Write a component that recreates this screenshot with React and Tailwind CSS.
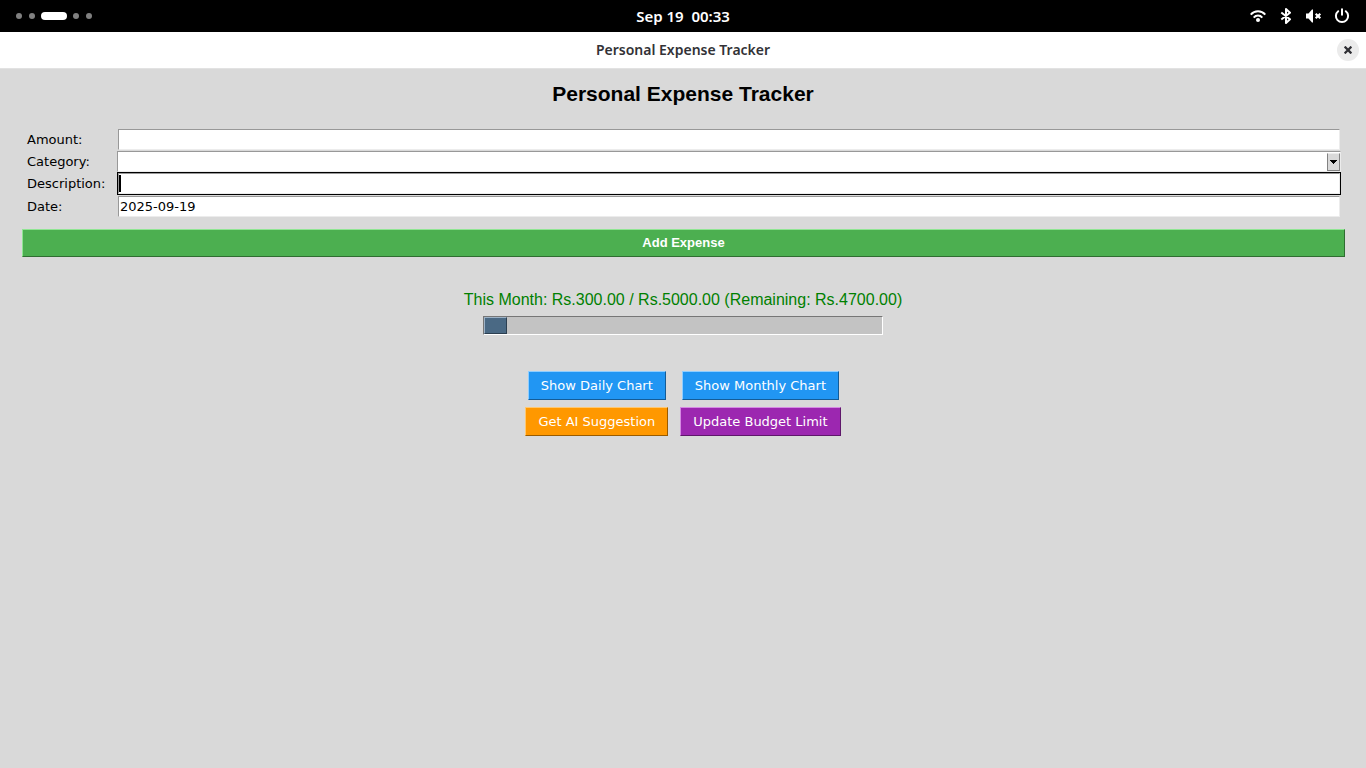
import React, { useState } from "react";

const BUDGET = { spent: 300, limit: 5000 };

function WorkspaceDots() {
  return (
    <button type="button" aria-label="Activities" className="flex items-center gap-[6px]">
      <span className="flex gap-[7px]">
        <span className="size-[6px] rounded-full bg-[#808080]" />
        <span className="size-[6px] rounded-full bg-[#808080]" />
      </span>
      <span className="h-2 w-[26px] rounded-full bg-white" />
      <span className="flex gap-[7px]">
        <span className="size-[6px] rounded-full bg-[#808080]" />
        <span className="size-[6px] rounded-full bg-[#808080]" />
      </span>
    </button>
  );
}

function StatusIcons() {
  return (
    <button type="button" aria-label="System status" className="flex items-center gap-3 text-white">
      <svg className="size-4" viewBox="0 0 16 16" fill="none" stroke="currentColor" strokeWidth="2">
        <path d="M.7 6.6C2.6 4.400 5.200 3.200 8 3.200s5.400 1.200 7.300 3.400" />
        <path d="M3.700 9.600C4.800 8.300 6.300 7.500 8 7.500s3.200.8 4.300 2.100" />
        <circle cx="8" cy="12" r="2" fill="currentColor" stroke="none" />
      </svg>
      <svg className="size-4" viewBox="0 0 16 16" fill="none" stroke="currentColor" strokeWidth="2" strokeLinejoin="round">
        <path d="M3.300 4.500 12 11.300 8 15V1l4 3.700-8.700 6.800" />
      </svg>
      <svg className="size-4" viewBox="0 0 16 16" fill="currentColor">
        <path d="M0 5.500h2.500L6 1.500h1v13H6l-3.500-4H0z" />
        <path d="m9.700 5.700 4.600 4.600m0-4.600-4.600 4.600" fill="none" stroke="currentColor" strokeWidth="2.200" />
      </svg>
      <svg className="size-4" viewBox="0 0 16 16" fill="none" stroke="currentColor" strokeWidth="2" strokeLinecap="round">
        <path d="M4.200 3.200A6.100 6.100 0 1 0 11.800 3.200" />
        <path d="M8 1.200v5.600" />
      </svg>
    </button>
  );
}

const entry =
  "h-[21px] w-full border border-t-[#989898] border-l-[#989898] border-r-[#ececec] border-b-[#ececec] bg-white px-px text-[13px] text-black outline-none";
const label = "pl-[5px] text-[13px] leading-[21px] text-black";

function ExpenseForm() {
  const [form, setForm] = useState({ amount: "", category: "", description: "", date: "2025-09-19" });
  const set = (key) => (e) => setForm({ ...form, [key]: e.target.value });
  return (
    <form onSubmit={(e) => e.preventDefault()} className="flex flex-col pr-[21px] pl-[22px]">
      <div className="grid grid-cols-[95px_1fr] items-center pr-1">
        <label htmlFor="amount" className={label}>Amount:</label>
        <div className="p-px">
          <input id="amount" value={form.amount} onChange={set("amount")} className={"block " + entry} />
        </div>

        <label htmlFor="category" className={label}>Category:</label>
        <div className="relative">
          <select id="category" value={form.category} onChange={set("category")} className={"block appearance-none " + entry}>
            <option value=""></option>
            <option>Food</option>
            <option>Transport</option>
            <option>Other</option>
          </select>
          <span className="pointer-events-none absolute top-0.5 right-px bottom-px flex w-[13px] items-center justify-center border border-t-[#ececec] border-l-[#828282] border-r-[#828282] border-b-[#828282] bg-[#d9d9d9]">
            <svg className="h-1 w-[7px]" viewBox="0 0 7 4" shapeRendering="crispEdges">
              <path d="M0 0h7v1H6v1H5v1H4v1H3V3H2V2H1V1H0z" />
            </svg>
          </span>
        </div>

        <label htmlFor="description" className={label}>Description:</label>
        <div className="relative border border-black">
          <input id="description" value={form.description} onChange={set("description")} className={"block caret-transparent " + entry} />
          {form.description === "" && <span className="pointer-events-none absolute inset-y-0.5 left-px w-0.5 bg-black" />}
        </div>

        <label htmlFor="date" className={label}>Date:</label>
        <div className="p-px">
          <input id="date" value={form.date} onChange={set("date")} className={"block " + entry} />
        </div>
      </div>

      <button
        type="submit"
        className="mt-[11px] h-7 border border-t-[#8fe592] border-l-[#8fe592] border-r-[#2f6d31] border-b-[#2f6d31] bg-[#4caf50] font-['Liberation_Sans',Arial,sans-serif] text-[13px] font-bold text-white"
      >
        Add Expense
      </button>
    </form>
  );
}

function BudgetStatus() {
  const { spent, limit } = BUDGET;
  return (
    <section className="mt-[33px] flex flex-col items-center">
      <p className="font-['Liberation_Sans',Arial,sans-serif] text-base leading-5 text-[#008000]">
        {`This Month: Rs.${spent.toFixed(2)} / Rs.${limit.toFixed(2)} (Remaining: Rs.${(limit - spent).toFixed(2)})`}
      </p>
      <div
        role="progressbar"
        aria-label="Budget used"
        aria-valuenow={spent}
        aria-valuemin={0}
        aria-valuemax={limit}
        className="mt-[6px] h-[19px] w-[400px] border border-t-[#767676] border-l-[#767676] border-r-white border-b-white bg-[#c3c3c3]"
      >
        <div
          className="h-full border border-t-[#9db2c6] border-l-[#9db2c6] border-r-[#2c3f50] border-b-[#2c3f50] bg-[#4a6984]"
          style={{ width: `${Math.floor((spent / limit) * 398)}px` }}
        />
      </div>
    </section>
  );
}

const action = "h-[29px] border px-3 text-[13px] whitespace-nowrap text-white";
const blue = "border-t-[#90ceff] border-l-[#90ceff] border-r-[#145c97] border-b-[#145c97] bg-[#2196f3]";
const orange = "border-t-[#ffc870] border-l-[#ffc870] border-r-[#995b00] border-b-[#995b00] bg-[#ff9800]";
const purple = "border-t-[#d68ae4] border-l-[#d68ae4] border-r-[#5e176a] border-b-[#5e176a] bg-[#9c27b0]";

export default function App() {
  return (
    <div className="flex min-h-screen flex-col bg-[#d9d9d9] font-['DejaVu_Sans',sans-serif]">
      <header className="grid h-8 grid-cols-[1fr_auto_1fr] items-center bg-black px-4">
        <div className="flex">
          <WorkspaceDots />
        </div>
        <time className="font-['Noto_Sans',sans-serif] text-[15px] leading-5 font-semibold whitespace-pre text-white">
          {"Sep 19  00:33"}
        </time>
        <div className="flex justify-end">
          <StatusIcons />
        </div>
      </header>

      <div className="grid h-[37px] grid-cols-[1fr_auto_1fr] items-center border-b border-[#e2e2e2] bg-white px-[7px]">
        <span />
        <span className="font-['Noto_Sans',sans-serif] text-sm font-semibold text-[#323236]">Personal Expense Tracker</span>
        <button type="button" aria-label="Close" className="flex size-[22px] items-center justify-center justify-self-end rounded-full bg-[#ebebeb] text-[#2e2e33]">
          <svg className="size-2" viewBox="0 0 8 8" fill="none" stroke="currentColor" strokeWidth="2.200" strokeLinecap="square">
            <path d="m1.400 1.400 5.200 5.200M6.600 1.400 1.400 6.600" />
          </svg>
        </button>
      </div>

      <main className="flex flex-col">
        <h1 className="mt-[13px] mb-[22px] text-center font-['Liberation_Sans',Arial,sans-serif] text-[21px] leading-6 font-bold text-black">
          Personal Expense Tracker
        </h1>
        <ExpenseForm />
        <BudgetStatus />
        <div className="mt-9 grid grid-cols-[auto_auto] justify-center justify-items-center gap-x-3 gap-y-[7px]">
          <button type="button" className={action + " " + blue}>Show Daily Chart</button>
          <button type="button" className={action + " " + blue}>Show Monthly Chart</button>
          <button type="button" className={action + " " + orange}>Get AI Suggestion</button>
          <button type="button" className={action + " " + purple}>Update Budget Limit</button>
        </div>
      </main>
    </div>
  );
}
